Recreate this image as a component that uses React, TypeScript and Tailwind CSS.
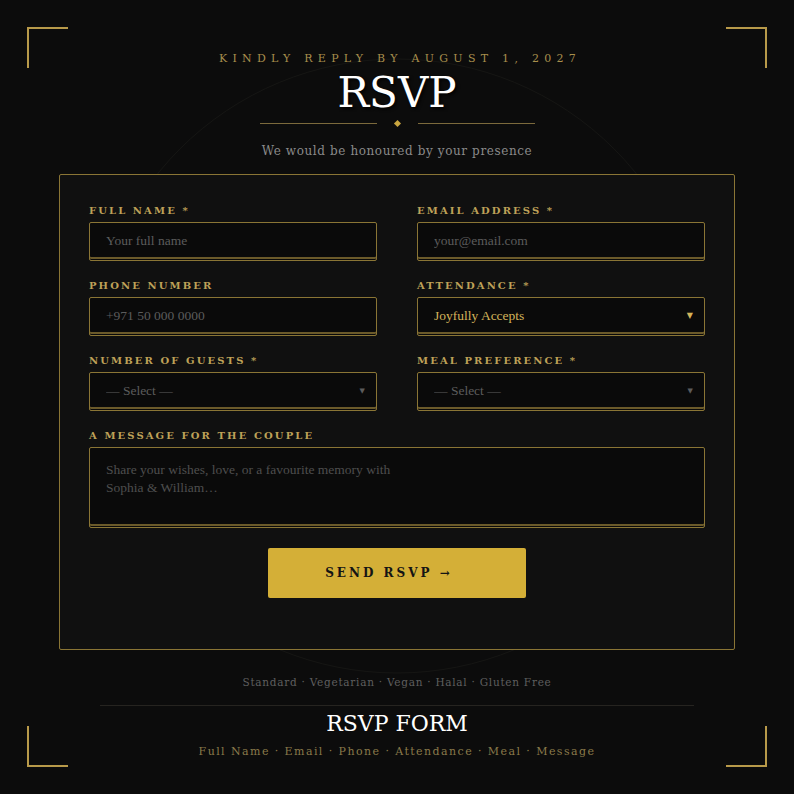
import { ChangeEvent, useState } from 'react';

const serif = { fontFamily: '"DejaVu Serif", serif' };
const times = { fontFamily: '"Liberation Serif", "Times New Roman", serif' };

const fieldBox =
    'block h-[39px] w-full rounded-[2px] border border-[#8a7535] bg-[#0a0a0a] shadow-[inset_0_-1px_0_#0a0a0a,inset_0_-3px_0_#6b5a2a] px-4 text-[13.5px] outline-none';

function Label({ children }: { children: string }) {
    return (
        <label className="block mb-[5px] text-[10px] leading-[12px] font-bold uppercase tracking-[0.21em] text-[#bea158]" style={serif}>
            {children}
        </label>
    );
}

function Corner({ pos }: { pos: string }) {
    return <div className={`absolute h-[41px] w-[41px] border-[#b89a4a] ${pos}`} />;
}

export default function App() {
    const [attendance, setAttendance] = useState('Joyfully Accepts');

    return (
        <div className="relative h-[794px] w-[794px] overflow-hidden bg-[#0c0c0c]" style={serif}>
            {/* faint ring behind the heading */}
            <svg className="pointer-events-none absolute left-0 top-0" width="794" height="794">
                <circle cx="397" cy="366" r="307" fill="none" stroke="#161614" strokeWidth="1" />
            </svg>

            <Corner pos="left-[27px] top-[27px] border-l-2 border-t-2" />
            <Corner pos="right-[27px] top-[27px] border-r-2 border-t-2" />
            <Corner pos="left-[27px] bottom-[27px] border-l-2 border-b-2" />
            <Corner pos="right-[27px] bottom-[27px] border-r-2 border-b-2" />

            <div className="relative flex flex-col items-center">
                <p className="mt-[51px] pl-[6px] text-[11px] tracking-[0.48em] text-[#a88f4c]">KINDLY REPLY BY AUGUST 1, 2027</p>
                <h1 className="mt-[2px] text-[42px] leading-[46px] text-white [text-shadow:2px_2px_3px_rgba(0,0,0,0.8)]">RSVP</h1>

                <div className="mt-[5px] flex items-center gap-[18px]">
                    <div className="h-px w-[117px] bg-[#7c6a3c]" />
                    <div className="h-[5px] w-[5px] rotate-45 bg-[#c9a640]" />
                    <div className="h-px w-[117px] bg-[#7c6a3c]" />
                </div>

                <p className="mt-[16px] text-[12px] tracking-[0.05em] text-[#8a8a8a]">We would be honoured by your presence</p>

                <form
                    className="mt-[14px] w-[676px] rounded-[2px] border border-[#8a7535] bg-[#101010] px-[29px] pb-[51px] pt-[30px]"
                    style={times}
                    onSubmit={(e) => e.preventDefault()}
                >
                    <div className="grid grid-cols-2 gap-x-[40px] gap-y-[19px]">
                        <div>
                            <Label>Full Name *</Label>
                            <input className={`${fieldBox} text-[#ddd] placeholder:text-[#5c5c5c]`} placeholder="Your full name" />
                        </div>
                        <div>
                            <Label>Email Address *</Label>
                            <input className={`${fieldBox} text-[#ddd] placeholder:text-[#5c5c5c]`} placeholder="your@email.com" />
                        </div>
                        <div>
                            <Label>Phone Number</Label>
                            <input className={`${fieldBox} text-[#ddd] placeholder:text-[#5c5c5c]`} placeholder="+971 50 000 0000" />
                        </div>
                        <div>
                            <Label>Attendance *</Label>
                            <div className="relative">
                                <select
                                    className={`${fieldBox} appearance-none text-[#d4b45a]`}
                                    value={attendance}
                                    onChange={(e: ChangeEvent<HTMLSelectElement>) => setAttendance(e.target.value)}
                                >
                                    <option>Joyfully Accepts</option>
                                    <option>Regretfully Declines</option>
                                </select>
                                <span className="pointer-events-none absolute right-[12px] top-[14px] text-[8px] leading-[10px] text-[#d4b45a]" style={serif}>
                                    ▼
                                </span>
                            </div>
                        </div>
                        <div>
                            <Label>Number of Guests *</Label>
                            <div className="relative">
                                <select className={`${fieldBox} appearance-none text-[#5c5c5c]`} defaultValue="">
                                    <option value="">— Select —</option>
                                    <option>1</option>
                                    <option>2</option>
                                </select>
                                <span className="pointer-events-none absolute right-[12px] top-[15px] text-[7px] leading-[9px] text-[#5c5c5c]" style={serif}>
                                    ▼
                                </span>
                            </div>
                        </div>
                        <div>
                            <Label>Meal Preference *</Label>
                            <div className="relative">
                                <select className={`${fieldBox} appearance-none text-[#5c5c5c]`} defaultValue="">
                                    <option value="">— Select —</option>
                                    <option>Standard</option>
                                    <option>Vegetarian</option>
                                </select>
                                <span className="pointer-events-none absolute right-[12px] top-[15px] text-[7px] leading-[9px] text-[#5c5c5c]" style={serif}>
                                    ▼
                                </span>
                            </div>
                        </div>
                        <div className="col-span-2">
                            <Label>A Message for the Couple</Label>
                            <textarea
                                className={`${fieldBox} h-[81px] resize-none pt-[13px] pr-[300px] leading-[18px] text-[#ddd] placeholder:text-[#4e4e4e]`}
                                placeholder="Share your wishes, love, or a favourite memory with Sophia & William…"
                            />
                        </div>
                    </div>

                    <div className="mt-[20px] flex justify-center">
                        <button
                            type="submit"
                            className="h-[50px] w-[258px] rounded-[2px] bg-[#d4af37] pr-4 text-[12px] font-bold tracking-[0.25em] text-[#141414]"
                            style={serif}
                        >
                            SEND RSVP →
                        </button>
                    </div>
                </form>

                <p className="mt-[25px] text-[10.5px] tracking-[0.07em] text-[#5f5f5f]">Standard · Vegetarian · Vegan · Halal · Gluten Free</p>
                <div className="mt-[15px] h-px w-[594px] bg-[#262420]" />
                <h2 className="mt-[3px] text-[22px] leading-[30px] text-white">RSVP FORM</h2>
                <p className="mt-[5px] text-[11px] tracking-[0.13em] text-[#8a7a4a]">Full Name · Email · Phone · Attendance · Meal · Message</p>
            </div>
        </div>
    );
}
